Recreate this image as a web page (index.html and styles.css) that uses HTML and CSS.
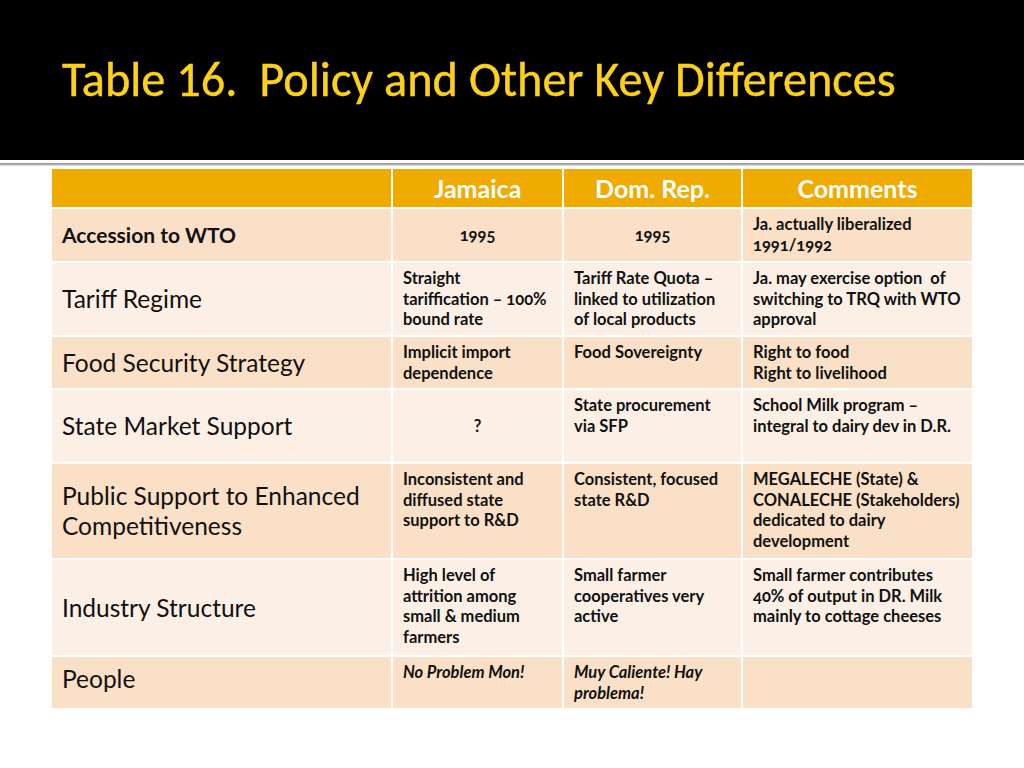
FILE: index.html
```html
<!DOCTYPE html>
<html>
<head>
<meta charset="utf-8">
<link rel="stylesheet" href="styles.css">
</head>
<body>
<header class="titlebar">
  <h1 class="title">Table 16.&nbsp; Policy and Other Key Differences</h1>
</header>
<div class="rule"></div>
<main class="wrap">
  <div class="grid">
    <div class="hd"></div>
    <div class="hd">Jamaica</div>
    <div class="hd">Dom. Rep.</div>
    <div class="hd">Comments</div>

    <div class="c lbl dark bold">Accession to WTO</div>
    <div class="c dark center">1995</div>
    <div class="c dark center">1995</div>
    <div class="c dark top">Ja. actually liberalized<br>1991/1992</div>

    <div class="c lbl light">Tariff Regime</div>
    <div class="c light top">Straight<br>tariffication – 100%<br>bound rate</div>
    <div class="c light top">Tariff Rate Quota –<br>linked to utilization<br>of local products</div>
    <div class="c light top">Ja. may exercise option&nbsp; of<br>switching to TRQ with WTO<br>approval</div>

    <div class="c lbl dark">Food Security Strategy</div>
    <div class="c dark top">Implicit import<br>dependence</div>
    <div class="c dark top">Food Sovereignty</div>
    <div class="c dark top">Right to food<br>Right to livelihood</div>

    <div class="c lbl light">State Market Support</div>
    <div class="c light center">?</div>
    <div class="c light top">State procurement<br>via SFP</div>
    <div class="c light top">School Milk program –<br>integral to dairy dev in D.R.</div>

    <div class="c lbl dark">Public Support to Enhanced<br>Competitiveness</div>
    <div class="c dark top">Inconsistent and<br>diffused state<br>support to R&amp;D</div>
    <div class="c dark top">Consistent, focused<br>state R&amp;D</div>
    <div class="c dark top">MEGALECHE (State) &amp;<br>CONALECHE (Stakeholders)<br>dedicated to dairy<br>development</div>

    <div class="c lbl light">Industry Structure</div>
    <div class="c light top">High level of<br>attrition among<br>small &amp; medium<br>farmers</div>
    <div class="c light top">Small farmer<br>cooperatives very<br>active</div>
    <div class="c light top">Small farmer contributes<br>40% of output in DR. Milk<br>mainly to cottage cheeses</div>

    <div class="c lbl dark last">People</div>
    <div class="c dark top ital">No Problem Mon!</div>
    <div class="c dark top ital">Muy Caliente! Hay<br>problema!</div>
    <div class="c dark top"></div>
  </div>
</main>
</body>
</html>
```

FILE: styles.css
```css
html, body {
  margin: 0;
  padding: 0;
  background: #ffffff;
}
body {
  width: 1024px;
  height: 768px;
  overflow: hidden;
  font-family: "Lato", "Liberation Sans", sans-serif;
}
.titlebar {
  background: #000000;
  height: 160px;
  display: flex;
  align-items: flex-start;
  padding-left: 62px;
  box-sizing: border-box;
}
.title {
  margin: 0;
  padding-top: 50px;
  font-family: "Carlito", "Lato", sans-serif;
  font-size: 48.3px;
  font-weight: 400;
  color: #fdd11a;
  line-height: 60px;
  white-space: nowrap;
  -webkit-text-stroke: 0.4px #fdd11a;
}
.rule {
  margin-top: 3px;
  height: 3px;
  background: linear-gradient(to bottom, #8a8a8a 0, #b5b5b5 50%, #e6e6e6 100%);
}
.wrap {
  padding: 3px 0 0 52px;
}
.grid {
  width: 920px;
  display: grid;
  grid-template-columns: 339px 169px 177px 229px;
  grid-template-rows: 38px 52px 72px 51px 72px 94px 95px 51px;
  gap: 2px;
}
.hd {
  background: #efab00;
  color: #ffffff;
  font-weight: 700;
  font-size: 25px;
  display: flex;
  align-items: center;
  justify-content: center;
}
.c {
  box-sizing: border-box;
  padding: 0 2px 0 10px;
  color: #111111;
  font-size: 16.5px;
  font-weight: 700;
  line-height: 20.5px;
  white-space: nowrap;
  font-variant-numeric: oldstyle-nums;
}
.dark { background: #f9e0c7; }
.light { background: #fbefe6; }
.lbl {
  display: flex;
  align-items: center;
  font-size: 24.5px;
  font-weight: 400;
  line-height: 30px;
}
.lbl.bold {
  font-weight: 700;
  font-size: 21px;
}
.lbl.last {
  padding-bottom: 8px;
}
.top {
  padding-top: 5px;
}
.center {
  display: flex;
  align-items: center;
  justify-content: center;
  padding: 0;
}
.ital {
  font-style: italic;
}
```
